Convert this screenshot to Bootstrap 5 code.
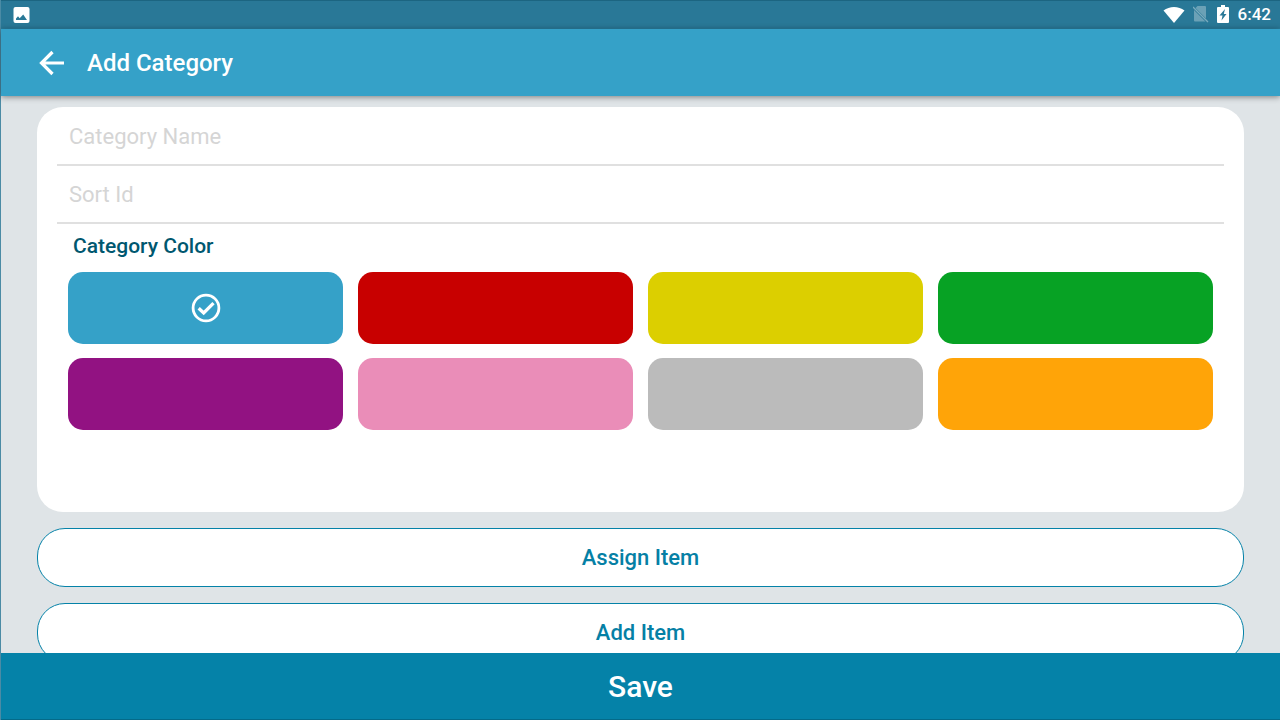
<!DOCTYPE html>
<html lang="en">
<head>
<meta charset="utf-8">
<meta name="viewport" content="width=device-width, initial-scale=1">
<title>Add Category</title>
<link href="https://cdn.jsdelivr.net/npm/bootstrap@5.3.0/dist/css/bootstrap.min.css" rel="stylesheet">
<style>
  body { font-family: Roboto, sans-serif; background: #dfe4e7; color: #fff; }
  .screen { border-left: 1px solid #4b8ba5; }
  .status-bar { height: 29px; padding: 0 9px 0 12px; background: #297897; border-top: 1px solid #1c6581; border-bottom: 1px solid #2a7f9f; font-size: 17px; line-height: 27px; }
  .app-bar { height: 67px; padding: 0 36px; gap: 22px; background: #35a1c8; box-shadow: 0 1px 6px rgba(0,0,0,.45); z-index: 2; }
  .app-title { font-size: 24px; line-height: 32px; }
  .content { padding: 11px 36px 16px; scrollbar-width: none; }
  .content::-webkit-scrollbar { display: none; }
  .panel { border-radius: 26px; padding: 1px 20px 82px; color: #00576f; }
  .field { height: 58px; padding: 0 12px; border: 0; border-bottom: 2px solid #e0e0e0; border-radius: 0; font-size: 22px; line-height: 32px; }
  .field:focus { box-shadow: none; border-color: #35a1c8; }
  .field::placeholder { color: #d5d5d5; }
  .group-title { font-size: 21px; line-height: 28px; padding: 0 16px; margin: 8px 0 12px; }
  .swatches { gap: 14px 15px; padding: 0 11px; grid-template-columns: repeat(4, 1fr); }
  .swatch { height: 72px; border-radius: 15px; cursor: pointer; color: #fff; }
  .swatch svg { visibility: hidden; }
  .btn-check:checked + .swatch svg { visibility: visible; }
  .btn-check:focus-visible + .swatch { outline: 2px solid #00576f; }
  .btn-item { height: 59px; border: 1px solid #0582a8; border-radius: 28px; background: #fff; color: #0580a5; font-size: 22px; line-height: 32px; }
  .btn-item:hover { background: #eef8fb; color: #0580a5; border-color: #0582a8; }
  .btn-save { height: 67px; padding: 8px 0 6px; border: 0; background: #0582a8; color: #fff; font-size: 30px; line-height: 40px; border-bottom: 1px solid #046a89; }
  .btn-save:hover { background: #04779b; color: #fff; }
  .medium { font-weight: 500; }
</style>
</head>
<body>
<div class="screen vh-100 d-flex flex-column">
  <div class="status-bar flex-shrink-0 d-flex align-items-center justify-content-between">
    <svg width="17" height="16" viewBox="0 0 16 16" aria-hidden="true"><rect width="16" height="16" rx="2" fill="#fff"/><path d="M2.500 13v-1.500l2-2.300 1.700 2 3.500-3.800 3.800 5.600z" fill="#297897"/></svg>
    <div class="d-flex align-items-center">
      <svg class="me-2" width="22" height="18" viewBox="0 0 22 18" aria-hidden="true"><path d="M.5 4.500C6.500-.2 15.500-.2 21.500 4.500L11 17z" fill="#fff"/></svg>
      <svg class="me-2" width="16" height="18" viewBox="1 1 16 18" aria-hidden="true"><path d="M5.500 1H13q1 0 1 1v11.500L3.500 3zM2 5l11.500 11.500H3q-1 0-1-1z" fill="#6ba1b6"/><path d="M1 2l15 15" stroke="#7babbe" stroke-width="1.300"/></svg>
      <svg class="me-2" width="13" height="19" viewBox="0 0 13 19" aria-hidden="true"><path d="M4 0h4v2h3q1 0 1 1v14q0 1-1 1H1q-1 0-1-1V3q0-1 1-1h3z" fill="#fff"/><path d="M8 4L2.500 10.500h3l-1 5L9.500 9H6.800z" fill="#297897"/></svg>
      <span class="medium">6:42</span>
    </div>
  </div>
  <header class="app-bar flex-shrink-0 position-relative d-flex align-items-center">
    <a href="#" class="d-flex" aria-label="Back">
      <svg width="28" height="28" viewBox="0 0 28 28" fill="none" stroke="#fff" stroke-width="3.200" aria-hidden="true"><path d="M27 14H5M15.500 3L4.500 14l11 11"/></svg>
    </a>
    <h1 class="app-title medium m-0">Add Category</h1>
  </header>
  <main class="content flex-grow-1 overflow-auto">
    <form id="category-form" class="panel bg-white mb-3">
      <input type="text" class="form-control field" placeholder="Category Name" aria-label="Category Name">
      <input type="text" class="form-control field" placeholder="Sort Id" aria-label="Sort Id">
      <h2 class="group-title medium" id="color-title">Category Color</h2>
      <div class="swatches d-grid" role="radiogroup" aria-labelledby="color-title"></div>
    </form>
    <button type="button" class="btn btn-item medium w-100 mb-3">Assign Item</button>
    <button type="button" class="btn btn-item medium w-100">Add Item</button>
  </main>
  <button type="submit" form="category-form" class="btn btn-save medium flex-shrink-0 rounded-0">Save</button>
</div>
<script src="https://cdn.jsdelivr.net/npm/bootstrap@5.3.0/dist/js/bootstrap.bundle.min.js"></script>
<script>
  const colors = [['Blue', '#35a1c8'], ['Red', '#c80000'], ['Yellow', '#dccf00'], ['Green', '#07a224'],
                  ['Purple', '#921282'], ['Pink', '#ea8db8'], ['Gray', '#bbbbbb'], ['Orange', '#ffa408']];
  document.querySelector('.swatches').innerHTML = colors.map(([name, value], i) => `
    <div>
      <input class="btn-check" type="radio" name="color" id="color-${i}" value="${value}" aria-label="${name}" ${i === 0 ? 'checked' : ''}>
      <label class="swatch d-flex align-items-center justify-content-center" for="color-${i}" style="background:${value}">
        <svg width="30" height="30" viewBox="0 0 30 30" fill="none" stroke="currentColor" aria-hidden="true"><circle cx="15" cy="15" r="12.900" stroke-width="2.800"/><path d="M7.700 15.200l5 4.800L22.500 10.200" stroke-width="3.300"/></svg>
      </label>
    </div>`).join('');
</script>
</body>
</html>
